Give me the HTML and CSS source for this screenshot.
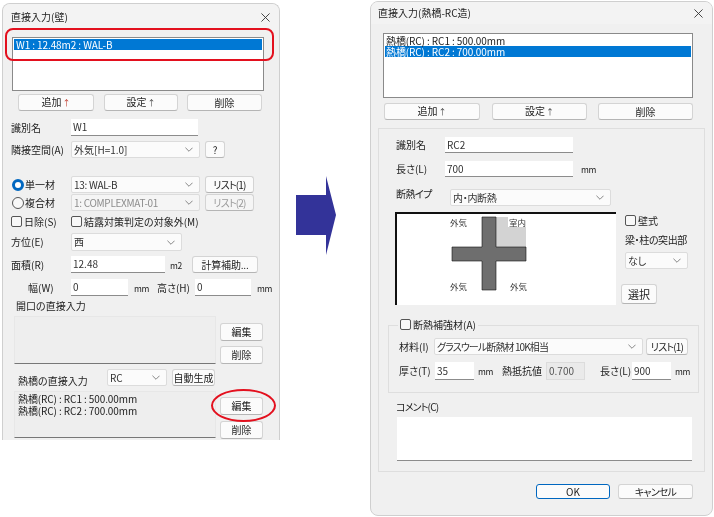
FILE: index.html
```html
<!DOCTYPE html>
<html lang="ja">
<head>
<meta charset="utf-8">
<title>直接入力</title>
<link rel="stylesheet" href="styles.css">
</head>
<body>
<svg width="0" height="0" class="defs"><defs>
<symbol id="chev" viewBox="0 0 9 5"><path d="M.5.5 4.5 4.5 8.5.5" fill="none" stroke="#777" stroke-width="1"/></symbol>
<symbol id="close" viewBox="0 0 10 10"><path d="M.5.5l9 9M9.5.5l-9 9" fill="none" stroke="#333" stroke-width="1"/></symbol>
</defs></svg>

<section class="win win-wall">
  <header class="titlebar"><span>直接入力(壁)</span><svg class="x"><use href="#close"/></svg></header>
  <div class="list wall-list"><div class="item sel">W1 : 12.48m2 : WAL-B</div></div>
  <div class="row wall-btns"><button class="btn w76">追加<i class="up red">↑</i></button><button class="btn w74">設定<i class="up">↑</i></button><button class="btn w75">削除</button></div>
  <div class="row wall-name"><span class="lab">識別名</span><div class="inp w127">W1</div></div>
  <div class="row wall-adj"><span class="lab">隣接空間(A)</span><div class="sel-box w129"><span>外気[H=1.0]</span><svg class="chev"><use href="#chev"/></svg></div><button class="btn w20">?</button></div>
  <div class="row wall-r1"><span class="lab"><i class="radio on"></i>単一材</span><div class="sel-box w129"><span class="tight">13: WAL-B</span><svg class="chev"><use href="#chev"/></svg></div><button class="btn w49 kana">リスト(1)</button></div>
  <div class="row wall-r2"><span class="lab"><i class="radio"></i>複合材</span><div class="sel-box w129 dis"><span class="tight">1: COMPLEXMAT-01</span><svg class="chev"><use href="#chev"/></svg></div><button class="btn w49 dis kana">リスト(2)</button></div>
  <div class="row wall-chk"><span class="lab"><i class="chk"></i>日除(S)</span><span class="chk-lab"><i class="chk"></i>結露対策判定の対象外(M)</span></div>
  <div class="row wall-dir"><span class="lab">方位(E)</span><div class="sel-box w111"><span>西</span><svg class="chev"><use href="#chev"/></svg></div></div>
  <div class="row wall-area"><span class="lab">面積(R)</span><div class="inp w94">12.48</div><span class="unit unit-m2">m2</span><button class="btn w66 calc">計算補助...</button></div>
  <div class="row wall-size"><span class="lab lab-w">幅(W)</span><div class="inp w57">0</div><span class="unit unit-mm">mm</span><span class="lab-h">高さ(H)</span><div class="inp w56">0</div><span class="unit unit-end">mm</span></div>
  <div class="wall-cap1">開口の直接入力</div>
  <div class="row wall-open"><div class="flat"></div><div class="side-btns open-btns"><button class="btn">編集</button><button class="btn">削除</button></div></div>
  <div class="row wall-tb"><span class="lab-tb">熱橋の直接入力</span><div class="sel-box w60">RC<svg class="chev"><use href="#chev"/></svg></div><button class="btn w43">自動生成</button></div>
  <div class="row wall-tblist"><div class="flat tb-text"><div>熱橋(RC) : RC1 : 500.00mm</div><div>熱橋(RC) : RC2 : 700.00mm</div></div><div class="side-btns tb-btns"><button class="btn">編集</button><button class="btn">削除</button></div></div>
</section>

<section class="win win-tb">
  <header class="titlebar tb-title"><span>直接入力(熱橋-RC造)</span><svg class="x"><use href="#close"/></svg></header>
  <div class="list tb-list"><div class="item">熱橋(RC) : RC1 : 500.00mm</div><div class="item sel">熱橋(RC) : RC2 : 700.00mm</div></div>
  <div class="row tb-btnrow"><button class="btn w96">追加<i class="up">↑</i></button><button class="btn w95">設定<i class="up">↑</i></button><button class="btn w95">削除</button></div>
  <div class="panel">
    <div class="row p-name"><span class="plab">識別名</span><div class="inp w128">RC2</div></div>
    <div class="row p-len"><span class="plab">長さ(L)</span><div class="inp w128">700</div><span class="unit p-mm">mm</span></div>
    <div class="row p-type"><span class="plab2">断熱イプ</span><div class="sel-box w161 type-sel"><span>内・内断熱</span><svg class="chev"><use href="#chev"/></svg></div></div>
    <div class="row p-dia">
      <div class="diagram">
        <svg width="221" height="93" viewBox="0 0 221 93">
          <rect x="101" y="5" width="30" height="30" fill="#d3d3d3"/>
          <path d="M87 5h14v30h30v14h-30v29h-14v-29H57V35h30z" fill="#6e6e6e" stroke="#111" stroke-width=".6"/>
        </svg>
        <span class="dlab d1">外気</span><span class="dlab d2">室内</span><span class="dlab d3">外気</span><span class="dlab d4">外気</span>
      </div>
      <div class="dia-side">
        <span class="kabe"><i class="chk"></i>壁式</span>
        <span class="proj">梁・柱の突出部</span>
        <div class="sel-box w63">なし<svg class="chev"><use href="#chev"/></svg></div>
        <button class="btn pick">選択</button>
      </div>
    </div>
    <fieldset class="group">
      <legend><i class="chk"></i>断熱補強材(A)</legend>
      <div class="row g-mat"><span class="g-l1">材料(I)</span><div class="sel-box w209"><span class="mat">グラスウール断熱材 10K相当</span><svg class="chev"><use href="#chev"/></svg></div><button class="btn w42 kana">リスト(1)</button></div>
      <div class="row g-th"><span class="g-l2">厚さ(T)</span><div class="inp w39">35</div><span class="unit g-mm">mm</span><span class="g-l3">熱抵抗値</span><div class="inp w39 ro">0.700</div><span class="g-l4">長さ(L)</span><div class="inp w39">900</div><span class="unit g-mm2">mm</span></div>
    </fieldset>
    <div class="c-cap">コメント(C)</div>
    <div class="inp comment"></div>
  </div>
  <div class="row foot"><button class="btn ok">OK</button><button class="btn cancel kana">キャンセル</button></div>
</section>

<span class="mark mark-rect"></span>
<span class="mark mark-oval"></span>
<svg class="arrow" width="41" height="80" viewBox="0 0 41 80"><path d="M0 19h30V0l10 39-10 40V59H0z" fill="#333399"/></svg>
</body>
</html>
```
FILE: styles.css
```css
* { box-sizing: border-box; }
html, body { margin: 0; padding: 0; }
body { width: 714px; height: 517px; position: relative; overflow: hidden; background: #fff; color: #222; font: 10px/12px "Noto Sans CJK JP", "Noto Sans", sans-serif; font-feature-settings: "palt"; }
.defs { position: absolute; }
i { font-style: normal; }

.win { position: absolute; background: #f0f0f0; border: 1px solid #cfcfcf; overflow: hidden; filter: blur(.3px); }
.win-wall { left: 2px; top: 3px; width: 278px; height: 437px; border-bottom: 0; border-radius: 8px 8px 0 0; padding-left: 8px; }
.win-tb { left: 370px; top: 1px; width: 343px; height: 515px; border-radius: 8px; padding-left: 7px; }

.titlebar { height: 26px; display: flex; align-items: center; justify-content: space-between; background: #f3f3f3; margin-left: -8px; padding: 0 9px 0 8px; }
.tb-title { height: 22px; margin-left: -7px; padding: 0 9px 0 7px; }
.x { width: 9px; height: 9px; }
.row { display: flex; align-items: center; }

.btn { display: block; padding: 0; height: 17px; background: #fbfbfb; border: 1px solid #d4d4d4; border-bottom-color: #b5b5b5; border-radius: 3px; font: inherit; font-feature-settings: inherit; color: inherit; white-space: nowrap; }
.btn.dis { color: #9a9a9a; background: #f5f5f5; }
.btn.kana { letter-spacing: -.8px; }
.calc { letter-spacing: -.2px; }
.up { color: #444; font-size: 8px; margin-left: 1px; }
.up.red { color: #c0392b; }
.inp { height: 17px; padding: 0 2px; background: #fff; border-bottom: 1px solid #8c8c8c; display: flex; align-items: center; color: #333; }
.inp.ro { background: #eaeaea; border: 1px solid #dcdcdc; color: #555; }
.sel-box { height: 17px; padding: 0 2px; background: #fbfbfb; border: 1px solid #dcdcdc; border-radius: 2px; display: flex; align-items: center; justify-content: space-between; white-space: nowrap; color: #333; }
.sel-box.dis { color: #8d8d8d; background: #f5f5f5; }
.tight { letter-spacing: -.3px; }
.chev { width: 8px; height: 5px; flex: none; margin-right: 4px; }
.chk { display: inline-block; width: 11px; height: 11px; border: 1px solid #555; border-radius: 2px; background: #f8f8f8; margin-right: 2px; vertical-align: -1px; }
.radio { display: inline-block; width: 12px; height: 12px; border: 1px solid #555; border-radius: 50%; margin: 0 1px 0 1px; vertical-align: -2px; background: #f8f8f8; }
.radio.on { border: 3px solid #0067c0; background: #fff; }
.unit { font-size: 8.5px; letter-spacing: -.4px; }

.w20 { width: 20px; } .w42 { width: 42px; } .w43 { width: 43px; } .w49 { width: 49px; } .w66 { width: 66px; }
.w74 { width: 74px; } .w75 { width: 75px; } .w76 { width: 76px; } .w95 { width: 95px; } .w96 { width: 96px; }
.w39 { width: 39px; } .w56 { width: 56px; } .w57 { width: 57px; } .w60 { width: 60px; } .w63 { width: 63px; }
.w94 { width: 94px; } .w111 { width: 111px; } .w127 { width: 127px; } .w128 { width: 128px; } .w129 { width: 129px; } .w161 { width: 161px; } .w209 { width: 209px; }

.list { background: #fff; border: 1px solid #8a8a8a; padding: 1px; }
.item { height: 11px; line-height: 11px; padding-left: 1px; white-space: nowrap; letter-spacing: -.1px; }
.item.sel { background: #0078d4; color: #fff; }

.lab { width: 60px; flex: none; white-space: nowrap; }
.wall-list { margin: 7px 0 0 1px; width: 252px; height: 54px; }
.wall-list .item { padding-left: 2px; letter-spacing: -.1px; }
.wall-btns { margin: 3px 0 0 7px; height: 17px; }
.wall-btns .w74 { margin: 0 9px 0 10px; }
.wall-name { margin-top: 8px; height: 17px; }
.wall-adj { margin-top: 5px; height: 17px; gap: 5px; }
.wall-adj .lab { margin-right: -5px; }
.wall-r1 { margin-top: 18px; height: 17px; }
.wall-r1 .btn, .wall-r2 .btn { margin-left: 5px; }
.wall-r2 { margin-top: 1px; height: 17px; }
.wall-chk { margin-top: 4px; height: 14px; }
.wall-dir { margin-top: 4px; height: 18px; }
.wall-dir .sel-box { height: 18px; }
.wall-area { margin-top: 5px; height: 17px; }
.unit-m2 { width: 27px; padding-left: 5px; flex: none; }
.wall-size { margin-top: 6px; height: 17px; }
.lab-w { padding-left: 17px; }
.unit-mm { width: 29px; padding-left: 6px; flex: none; }
.lab-h { width: 38px; flex: none; white-space: nowrap; }
.unit-end { padding-left: 6px; }
.wall-cap1 { margin: 4px 0 0 5px; height: 12px; }
.wall-open { margin: 4px 0 0 3px; height: 48px; align-items: flex-start; }
.flat { width: 202px; height: 100%; background: #eeeeee; border: 1px solid #e7e7e7; border-bottom-color: #777; flex: none; }
.side-btns { margin-left: 4px; display: flex; flex-direction: column; width: 43px; }
.side-btns .btn { width: 43px; height: 18px; }
.open-btns { padding-top: 7px; gap: 5px; }
.wall-tb { margin: 5px 0 0 7px; height: 17px; }
.lab-tb { width: 89px; flex: none; white-space: nowrap; padding-top: 6px; }
.wall-tb .btn { margin-left: 5px; }
.wall-tblist { margin: 5px 0 0 3px; height: 47px; align-items: flex-start; }
.tb-text { padding: 1px 0 0 3px; line-height: 11.5px; letter-spacing: -.1px; }
.tb-btns { padding-top: 6px; gap: 6px; }

.tb-list { margin: 9px 0 0 5px; width: 310px; height: 65px; }
.tb-btnrow { margin: 5px 0 0 6px; height: 17px; }
.tb-btnrow .w95:nth-child(2) { margin: 0 11px 0 12px; }

.panel { margin-top: 8px; width: 327px; height: 344px; border: 1px solid #dedede; padding-left: 17px; overflow: hidden; }
.plab { width: 49px; flex: none; white-space: nowrap; }
.p-name { margin-top: 8px; height: 16px; }
.p-name .inp, .p-len .inp { height: 16px; }
.p-len { margin-top: 8px; height: 16px; }
.p-mm { margin-left: 8px; }
.p-type { margin-top: 12px; height: 17px; }
.plab2 { width: 54px; flex: none; margin-top: -7px; letter-spacing: -.6px; white-space: nowrap; }
.type-sel span { letter-spacing: -.3px; }
.p-dia { margin: 6px 0 0 -1px; height: 93px; align-items: flex-start; }
.diagram { position: relative; width: 221px; height: 93px; background: #fff; border-top: 2px solid #111; border-left: 2px solid #111; flex: none; }
.diagram svg { display: block; margin: -2px 0 0 -2px; }
.dlab { position: absolute; font-size: 8.5px; line-height: 10px; background: #fff; padding: 0 1px; color: #333; }
.d1 { left: 52px; top: 3px; }
.d2 { left: 111px; top: 3px; }
.d3 { left: 52px; top: 67px; }
.d4 { left: 112px; top: 67px; }
.dia-side { margin-left: 5px; width: 72px; display: flex; flex-direction: column; align-items: flex-start; }
.kabe { margin: 3px 0 0 4px; }
.proj { margin: 7px 0 0 4px; white-space: nowrap; letter-spacing: -.4px; }
.dia-side .sel-box { margin: 6px 0 0 4px; }
.pick { width: 36px; height: 20px; margin-top: 15px; font-size: 11px; }

.group { margin: 13px 0 0 -8px; padding: 0; width: 311px; height: 75px; border: 1px solid #dedede; min-width: 0; }
.group legend { margin-left: 9px; padding: 0 2px; height: 14px; line-height: 14px; }
.g-mat { margin: 6px 0 0 10px; height: 17px; }
.g-mat .btn { margin-left: 3px; }
.g-l1 { width: 35px; flex: none; white-space: nowrap; }
.mat { letter-spacing: -.9px; }
.g-th { margin: 7px 0 0 10px; height: 18px; }
.g-th .inp { height: 18px; }
.g-l2 { width: 36px; flex: none; white-space: nowrap; }
.g-mm { width: 28px; padding-left: 4px; flex: none; }
.g-l3 { width: 44px; flex: none; white-space: nowrap; }
.g-l4 { width: 47px; padding-left: 15px; flex: none; white-space: nowrap; }
.g-mm2 { padding-left: 4px; }
.c-cap { margin-top: 8px; height: 12px; letter-spacing: -.8px; }
.comment { margin: 4px 0 0 1px; width: 295px; height: 44px; }

.foot { margin-top: 12px; padding-left: 158px; gap: 8px; }
.foot .btn { height: 15px; }
.ok { width: 74px; border: 1px solid #0067c0; }
.cancel { width: 75px; }

.mark { position: absolute; border: 2px solid #e3101e; }
.mark-rect { left: 5px; top: 28px; width: 269px; height: 33px; border-radius: 8px; }
.mark-oval { left: 211px; top: 389px; width: 65px; height: 33px; border-radius: 50%; }
.arrow { position: absolute; left: 296px; top: 176px; }
```
